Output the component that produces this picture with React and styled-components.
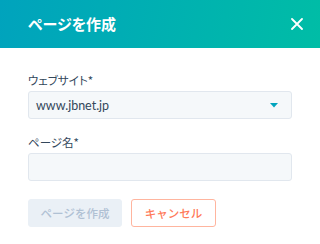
import React from "react"
import styled, {createGlobalStyle} from "styled-components"

const GlobalStyle = createGlobalStyle`
    html, body {
        margin: 0;
        padding: 0;
        background: #fff;
    }
    body {
        font-family: "Noto Sans CJK JP", "Noto Sans", sans-serif;
        font-feature-settings: "palt";
        color: #33475b;
    }
`

const Dialog = styled.div`
    width: 320px;
    height: 244px;
    background: #fff;
    overflow: hidden;
`

const Header = styled.header`
    height: 48px;
    display: flex;
    align-items: center;
    justify-content: space-between;
    padding: 0 17px 0 28px;
    box-sizing: border-box;
    background: linear-gradient(100deg, #00a3bd 0%, #00bda6 100%);
`

const Title = styled.h1`
    margin: 0;
    font-size: 15px;
    font-weight: 700;
    color: #fff;
    line-height: 20px;
`

const CloseButton = styled.button`
    width: 12px;
    height: 12px;
    padding: 0;
    border: 0;
    background: none;
    display: flex;
    cursor: pointer;
`

const Body = styled.div`
    padding: 24px 28px 0;
    display: flex;
    flex-direction: column;
`

const Field = styled.div`
    display: flex;
    flex-direction: column;
    gap: 3px;
    margin-bottom: ${(props) => props.last ? "18px" : "15px"};
`

const Label = styled.label`
    font-size: 11.5px;
    line-height: 16px;
    color: #33475b;
`

const Box = styled.div`
    height: 28px;
    box-sizing: border-box;
    border: 1px solid #e1e7ee;
    border-radius: 3px;
    background: #f5f8fa;
    display: flex;
    align-items: center;
    justify-content: space-between;
    padding: 0 13px 0 7px;
`

const SelectText = styled.span`
    font-family: "Lato", "Liberation Sans", sans-serif;
    font-size: 12.5px;
    color: #33475b;
`

const Input = styled.input`
    height: 28px;
    box-sizing: border-box;
    border: 1px solid #e1e7ee;
    border-radius: 3px;
    background: #f5f8fa;
    padding: 0 8px;
    font-size: 13px;
    outline: none;
`

const Actions = styled.div`
    display: flex;
    gap: 9px;
`

const Button = styled.button`
    height: 28px;
    box-sizing: border-box;
    border-radius: 3px;
    font-family: inherit;
    font-size: 11.5px;
    font-weight: 500;
    padding: 0;
    width: ${(props) => props.w}px;
    background: ${(props) => props.primary ? "#eaf0f6" : "#fff"};
    color: ${(props) => props.primary ? "#b0c1d4" : "#ff7a59"};
    border: 1px solid ${(props) => props.primary ? "#eaf0f6" : "#ffb59f"};
`

const App = () => {
    return (
        <Dialog>
            <GlobalStyle />
            <Header>
                <Title>ページを作成</Title>
                <CloseButton aria-label="閉じる">
                    <svg width="12" height="12" viewBox="0 0 12 12">
                        <path d="M1 1L11 11M11 1L1 11" stroke="#fff" strokeWidth="1.8" strokeLinecap="round" />
                    </svg>
                </CloseButton>
            </Header>
            <Body>
                <Field>
                    <Label>ウェブサイト*</Label>
                    <Box>
                        <SelectText>www.jbnet.jp</SelectText>
                        <svg width="8" height="5" viewBox="0 0 8 5">
                            <path d="M0 0H8L4 4.5Z" fill="#00a4bd" />
                        </svg>
                    </Box>
                </Field>
                <Field last>
                    <Label>ページ名*</Label>
                    <Input />
                </Field>
                <Actions>
                    <Button primary w={94}>ページを作成</Button>
                    <Button w={85}>キャンセル</Button>
                </Actions>
            </Body>
        </Dialog>
    )
}

export default App
